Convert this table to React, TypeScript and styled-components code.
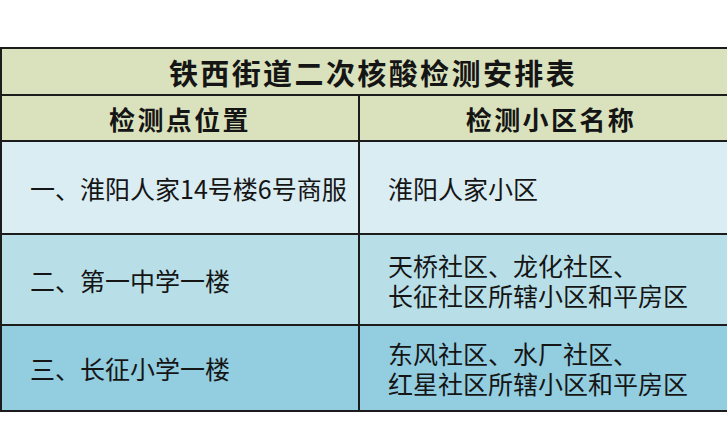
import React from "react";
import styled, { createGlobalStyle } from "styled-components";

const Global = createGlobalStyle`
  html, body {
    margin: 0;
    padding: 0;
    background: #ffffff;
    overflow: hidden;
  }
  body {
    font-family: "Noto Sans CJK SC", "Noto Sans", sans-serif;
    color: #151515;
  }
`;

const Page = styled.div`
  width: 727px;
  height: 448px;
  padding-top: 47px;
  box-sizing: border-box;
  overflow: hidden;
`;

const Table = styled.div`
  width: 740px;
  border-top: 2px solid #1c1c1c;
  border-left: 2px solid #1c1c1c;
  display: flex;
  flex-direction: column;
`;

const TitleRow = styled.div`
  height: 45px;
  border-bottom: 2px solid #1c1c1c;
  background: #dae2bd;
  display: flex;
  align-items: center;
  justify-content: center;
  font-size: 29px;
  font-weight: 700;
  letter-spacing: 2.4px;
  padding-left: 2px;
`;

const Row = styled.div<{ $h: number; $bg: string }>`
  display: grid;
  grid-template-columns: 358px 1fr;
  height: ${(p) => p.$h}px;
  background: ${(p) => p.$bg};
  border-bottom: 2px solid #1c1c1c;
`;

const HeadCell = styled.div<{ $first?: boolean }>`
  display: flex;
  align-items: center;
  justify-content: center;
  font-size: 26px;
  font-weight: 700;
  letter-spacing: 2.4px;
  border-right: ${(p) => (p.$first ? "2px solid #1c1c1c" : "none")};
`;

const Cell = styled.div<{ $first?: boolean }>`
  display: flex;
  flex-direction: column;
  justify-content: center;
  padding-left: ${(p) => (p.$first ? 28 : 28)}px;
  font-size: 25px;
  line-height: 30px;
  font-weight: 400;
  white-space: nowrap;
  border-right: ${(p) => (p.$first ? "2px solid #1c1c1c" : "none")};
`;

const rows = [
  { h: 91, bg: "#daedf3", left: "一、淮阳人家14号楼6号商服", right: ["淮阳人家小区"] },
  { h: 89, bg: "#b8dfe8", left: "二、第一中学一楼", right: ["天桥社区、龙化社区、", "长征社区所辖小区和平房区"] },
  { h: 84, bg: "#93cde0", left: "三、长征小学一楼", right: ["东风社区、水厂社区、", "红星社区所辖小区和平房区"] },
];

export default function App() {
  return (
    <>
      <Global />
      <Page>
        <Table>
          <TitleRow>铁西街道二次核酸检测安排表</TitleRow>
          <Row $h={44} $bg="#dae2bd">
            <HeadCell $first>检测点位置</HeadCell>
            <HeadCell>检测小区名称</HeadCell>
          </Row>
          {rows.map((r, i) => (
            <Row key={i} $h={r.h} $bg={r.bg}>
              <Cell $first>{r.left}</Cell>
              <Cell>
                {r.right.map((t, j) => (
                  <span key={j}>{t}</span>
                ))}
              </Cell>
            </Row>
          ))}
        </Table>
      </Page>
    </>
  );
}
